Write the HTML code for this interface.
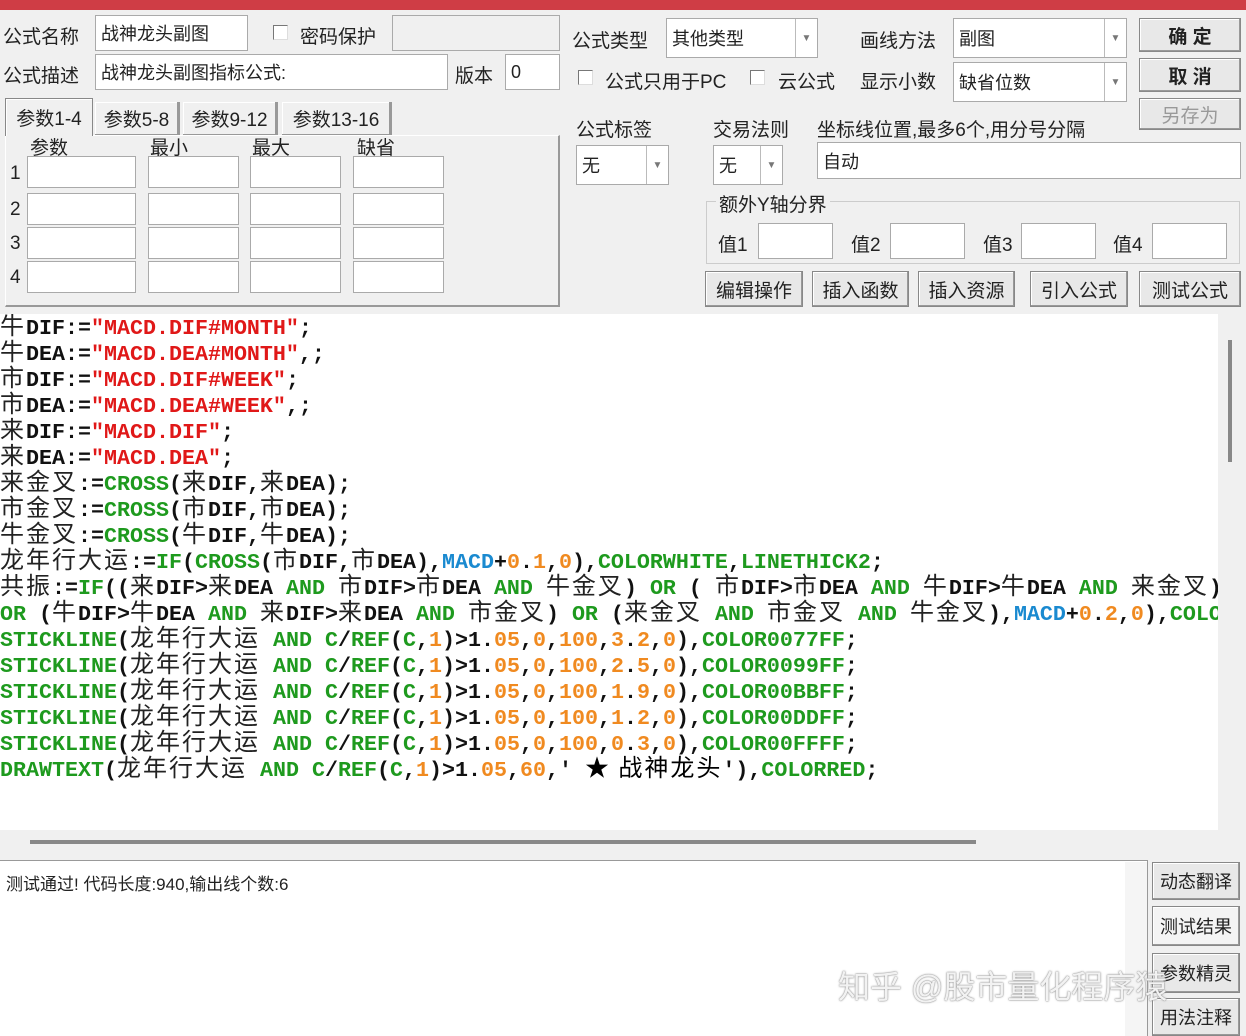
<!DOCTYPE html>
<html><head><meta charset="utf-8"><style>
*{box-sizing:border-box;margin:0;padding:0}
body{width:1246px;height:1036px;overflow:hidden;background:#f0f0f0;position:relative;font-family:"Liberation Sans","Noto Sans CJK SC",sans-serif;font-size:19px;color:#222}
.a{position:absolute}
.lbl{position:absolute;font-size:19px;color:#222;white-space:nowrap}
.in{position:absolute;background:#fff;border:1px solid #aaa;font-size:18px;padding-left:5px;white-space:nowrap;display:flex;align-items:center}
.dis{background:#f0f0f0}
.cb{position:absolute;width:15px;height:15px;background:#fff;border:1px solid #777;border-right-color:#ddd;border-bottom-color:#ddd}
.dd{position:absolute;right:0;top:0;bottom:0;width:22px;border-left:1px solid #bbb;color:#777;font-size:10px;display:flex;align-items:center;justify-content:center}
.btn{position:absolute;background:#e8e8e8;border:1px solid #888;box-shadow:inset -1px -1px 0 #999,inset 1px 1px 0 #fff;font-size:19px;display:flex;align-items:center;justify-content:center;white-space:nowrap;color:#222}
#code{position:absolute;left:0;top:314px;width:1218px;height:516px;background:#fff;overflow:hidden}
#code .in2{position:absolute;left:0;top:-3px}
#code .in2 div{height:26px;line-height:26px;white-space:pre;font-family:"Liberation Mono",monospace;font-size:21.67px;font-weight:bold;color:#111}
.c{font-family:"Noto Sans CJK SC",sans-serif;font-weight:normal;font-size:24px;letter-spacing:2px;color:#222}
.g{color:#1e9a1e}.r{color:#e01818}.o{color:#f08a20}.b{color:#1a8ad0}
</style></head><body>
<div class="a" style="left:0;top:0;width:1246px;height:10px;background:#cf3d45"></div>

<div class="lbl" style="left:3px;top:22px">公式名称</div>
<div class="in" style="left:95px;top:15px;width:153px;height:36px">战神龙头副图</div>
<div class="cb" style="left:273px;top:25px"></div>
<div class="lbl" style="left:300px;top:22px">密码保护</div>
<div class="in dis" style="left:392px;top:15px;width:168px;height:36px"></div>
<div class="lbl" style="left:3px;top:61px">公式描述</div>
<div class="in" style="left:95px;top:54px;width:353px;height:36px">战神龙头副图指标公式:</div>
<div class="lbl" style="left:455px;top:61px">版本</div>
<div class="in" style="left:505px;top:54px;width:55px;height:36px">0</div>

<div class="lbl" style="left:572px;top:26px">公式类型</div>
<div class="in" style="left:666px;top:18px;width:152px;height:40px">其他类型<div class="dd">▼</div></div>
<div class="lbl" style="left:860px;top:26px">画线方法</div>
<div class="in" style="left:953px;top:18px;width:174px;height:40px">副图<div class="dd">▼</div></div>
<div class="btn" style="left:1139px;top:18px;width:102px;height:34px;font-weight:bold">确 定</div>
<div class="cb" style="left:578px;top:70px"></div>
<div class="lbl" style="left:605px;top:67px">公式只用于PC</div>
<div class="cb" style="left:750px;top:70px"></div>
<div class="lbl" style="left:778px;top:67px">云公式</div>
<div class="lbl" style="left:860px;top:67px">显示小数</div>
<div class="in" style="left:953px;top:62px;width:174px;height:40px">缺省位数<div class="dd">▼</div></div>
<div class="btn" style="left:1139px;top:58px;width:102px;height:34px;font-weight:bold">取 消</div>
<div class="btn" style="left:1139px;top:98px;width:102px;height:32px;color:#999">另存为</div>

<div class="a" style="left:5px;top:135px;width:555px;height:172px;border:1px solid #fff;border-right:2px solid #999;border-bottom:2px solid #999"></div>
<div class="btn" style="left:5px;top:98px;width:88px;height:38px;background:#f0f0f0;border-bottom:none;box-shadow:inset 1px 1px 0 #fff">参数1-4</div>
<div class="btn" style="left:95px;top:102px;width:85px;height:33px;background:#f0f0f0;border:none;border-right:2px solid #999">参数5-8</div>
<div class="btn" style="left:183px;top:102px;width:95px;height:33px;background:#f0f0f0;border:none;border-right:2px solid #999">参数9-12</div>
<div class="btn" style="left:282px;top:102px;width:110px;height:33px;background:#f0f0f0;border:none;border-right:2px solid #999">参数13-16</div>
<div class="lbl" style="left:30px;top:133px">参数</div>
<div class="lbl" style="left:150px;top:133px">最小</div>
<div class="lbl" style="left:252px;top:133px">最大</div>
<div class="lbl" style="left:357px;top:133px">缺省</div>
<div class="lbl" style="left:10px;top:163px">1</div><div class="lbl" style="left:10px;top:199px">2</div><div class="lbl" style="left:10px;top:233px">3</div><div class="lbl" style="left:10px;top:267px">4</div>
<div class="in" style="left:27px;top:156px;width:109px;height:32px"></div><div class="in" style="left:148px;top:156px;width:91px;height:32px"></div><div class="in" style="left:250px;top:156px;width:91px;height:32px"></div><div class="in" style="left:353px;top:156px;width:91px;height:32px"></div>
<div class="in" style="left:27px;top:193px;width:109px;height:32px"></div><div class="in" style="left:148px;top:193px;width:91px;height:32px"></div><div class="in" style="left:250px;top:193px;width:91px;height:32px"></div><div class="in" style="left:353px;top:193px;width:91px;height:32px"></div>
<div class="in" style="left:27px;top:227px;width:109px;height:32px"></div><div class="in" style="left:148px;top:227px;width:91px;height:32px"></div><div class="in" style="left:250px;top:227px;width:91px;height:32px"></div><div class="in" style="left:353px;top:227px;width:91px;height:32px"></div>
<div class="in" style="left:27px;top:261px;width:109px;height:32px"></div><div class="in" style="left:148px;top:261px;width:91px;height:32px"></div><div class="in" style="left:250px;top:261px;width:91px;height:32px"></div><div class="in" style="left:353px;top:261px;width:91px;height:32px"></div>

<div class="lbl" style="left:576px;top:115px">公式标签</div>
<div class="lbl" style="left:713px;top:115px">交易法则</div>
<div class="lbl" style="left:817px;top:115px">坐标线位置,最多6个,用分号分隔</div>
<div class="in" style="left:576px;top:145px;width:93px;height:40px">无<div class="dd">▼</div></div>
<div class="in" style="left:713px;top:145px;width:70px;height:40px">无<div class="dd">▼</div></div>
<div class="in" style="left:817px;top:142px;width:424px;height:37px">自动</div>
<div class="a" style="left:706px;top:201px;width:534px;height:63px;border:1px solid #ccc"></div>
<div class="lbl" style="left:716px;top:190px;background:#f0f0f0;padding:0 3px">额外Y轴分界</div>
<div class="lbl" style="left:718px;top:230px">值1</div><div class="in" style="left:758px;top:223px;width:75px;height:36px"></div>
<div class="lbl" style="left:851px;top:230px">值2</div><div class="in" style="left:890px;top:223px;width:75px;height:36px"></div>
<div class="lbl" style="left:983px;top:230px">值3</div><div class="in" style="left:1021px;top:223px;width:75px;height:36px"></div>
<div class="lbl" style="left:1113px;top:230px">值4</div><div class="in" style="left:1152px;top:223px;width:75px;height:36px"></div>
<div class="btn" style="left:705px;top:271px;width:98px;height:36px">编辑操作</div>
<div class="btn" style="left:812px;top:271px;width:97px;height:36px">插入函数</div>
<div class="btn" style="left:918px;top:271px;width:97px;height:36px">插入资源</div>
<div class="btn" style="left:1030px;top:271px;width:98px;height:36px">引入公式</div>
<div class="btn" style="left:1139px;top:271px;width:102px;height:36px">测试公式</div>

<div id="code"><div class="in2">
<div><span class="c">牛</span>DIF:=<span class="r">"MACD.DIF#MONTH"</span>;</div>
<div><span class="c">牛</span>DEA:=<span class="r">"MACD.DEA#MONTH"</span>,;</div>
<div><span class="c">市</span>DIF:=<span class="r">"MACD.DIF#WEEK"</span>;</div>
<div><span class="c">市</span>DEA:=<span class="r">"MACD.DEA#WEEK"</span>,;</div>
<div><span class="c">来</span>DIF:=<span class="r">"MACD.DIF"</span>;</div>
<div><span class="c">来</span>DEA:=<span class="r">"MACD.DEA"</span>;</div>
<div><span class="c">来金叉</span>:=<span class="g">CROSS</span>(<span class="c">来</span>DIF,<span class="c">来</span>DEA);</div>
<div><span class="c">市金叉</span>:=<span class="g">CROSS</span>(<span class="c">市</span>DIF,<span class="c">市</span>DEA);</div>
<div><span class="c">牛金叉</span>:=<span class="g">CROSS</span>(<span class="c">牛</span>DIF,<span class="c">牛</span>DEA);</div>
<div><span class="c">龙年行大运</span>:=<span class="g">IF</span>(<span class="g">CROSS</span>(<span class="c">市</span>DIF,<span class="c">市</span>DEA),<span class="b">MACD</span>+<span class="o">0</span>.<span class="o">1</span>,<span class="o">0</span>),<span class="g">COLORWHITE</span>,<span class="g">LINETHICK2</span>;</div>
<div><span class="c">共振</span>:=<span class="g">IF</span>((<span class="c">来</span>DIF&gt;<span class="c">来</span>DEA <span class="g">AND</span> <span class="c">市</span>DIF&gt;<span class="c">市</span>DEA <span class="g">AND</span> <span class="c">牛金叉</span>) <span class="g">OR</span> ( <span class="c">市</span>DIF&gt;<span class="c">市</span>DEA <span class="g">AND</span> <span class="c">牛</span>DIF&gt;<span class="c">牛</span>DEA <span class="g">AND</span> <span class="c">来金叉</span>);</div>
<div><span class="g">OR</span> (<span class="c">牛</span>DIF&gt;<span class="c">牛</span>DEA <span class="g">AND</span> <span class="c">来</span>DIF&gt;<span class="c">来</span>DEA <span class="g">AND</span> <span class="c">市金叉</span>) <span class="g">OR</span> (<span class="c">来金叉</span> <span class="g">AND</span> <span class="c">市金叉</span> <span class="g">AND</span> <span class="c">牛金叉</span>),<span class="b">MACD</span>+<span class="o">0</span>.<span class="o">2</span>,<span class="o">0</span>),<span class="g">COLORRED</span>;</div>
<div><span class="g">STICKLINE</span>(<span class="c">龙年行大运</span> <span class="g">AND</span> <span class="g">C</span>/<span class="g">REF</span>(<span class="g">C</span>,<span class="o">1</span>)&gt;1.<span class="o">05</span>,<span class="o">0</span>,<span class="o">100</span>,<span class="o">3</span>.<span class="o">2</span>,<span class="o">0</span>),<span class="g">COLOR0077FF</span>;</div>
<div><span class="g">STICKLINE</span>(<span class="c">龙年行大运</span> <span class="g">AND</span> <span class="g">C</span>/<span class="g">REF</span>(<span class="g">C</span>,<span class="o">1</span>)&gt;1.<span class="o">05</span>,<span class="o">0</span>,<span class="o">100</span>,<span class="o">2</span>.<span class="o">5</span>,<span class="o">0</span>),<span class="g">COLOR0099FF</span>;</div>
<div><span class="g">STICKLINE</span>(<span class="c">龙年行大运</span> <span class="g">AND</span> <span class="g">C</span>/<span class="g">REF</span>(<span class="g">C</span>,<span class="o">1</span>)&gt;1.<span class="o">05</span>,<span class="o">0</span>,<span class="o">100</span>,<span class="o">1</span>.<span class="o">9</span>,<span class="o">0</span>),<span class="g">COLOR00BBFF</span>;</div>
<div><span class="g">STICKLINE</span>(<span class="c">龙年行大运</span> <span class="g">AND</span> <span class="g">C</span>/<span class="g">REF</span>(<span class="g">C</span>,<span class="o">1</span>)&gt;1.<span class="o">05</span>,<span class="o">0</span>,<span class="o">100</span>,<span class="o">1</span>.<span class="o">2</span>,<span class="o">0</span>),<span class="g">COLOR00DDFF</span>;</div>
<div><span class="g">STICKLINE</span>(<span class="c">龙年行大运</span> <span class="g">AND</span> <span class="g">C</span>/<span class="g">REF</span>(<span class="g">C</span>,<span class="o">1</span>)&gt;1.<span class="o">05</span>,<span class="o">0</span>,<span class="o">100</span>,<span class="o">0</span>.<span class="o">3</span>,<span class="o">0</span>),<span class="g">COLOR00FFFF</span>;</div>
<div><span class="g">DRAWTEXT</span>(<span class="c">龙年行大运</span> <span class="g">AND</span> <span class="g">C</span>/<span class="g">REF</span>(<span class="g">C</span>,<span class="o">1</span>)&gt;1.<span class="o">05</span>,<span class="o">60</span>,' <span class="c" style="color:#000">★ 战神龙头</span>'),<span class="g">COLORRED</span>;</div>
</div></div>
<div class="a" style="left:1218px;top:314px;width:24px;height:516px;background:#f0f0f0"></div>
<div class="a" style="left:1228px;top:340px;width:4px;height:122px;background:#888"></div>
<div class="a" style="left:0;top:830px;width:1242px;height:28px;background:#f0f0f0"></div>
<div class="a" style="left:30px;top:840px;width:946px;height:4px;background:#888"></div>

<div class="a" style="left:0;top:860px;width:1148px;height:176px;background:#fff;border-top:1px solid #999;border-right:1px solid #999"></div>
<div class="a" style="left:1125px;top:862px;width:22px;height:174px;background:#f5f5f5"></div>
<div class="lbl" style="left:6px;top:870px;font-size:17px">测试通过! 代码长度:940,输出线个数:6</div>
<div class="btn" style="left:1152px;top:862px;width:88px;height:38px;font-size:18px">动态翻译</div>
<div class="btn" style="left:1152px;top:906px;width:88px;height:40px;font-size:18px;background:#f4f4f4">测试结果</div>
<div class="btn" style="left:1152px;top:953px;width:88px;height:40px;font-size:18px">参数精灵</div>
<div class="btn" style="left:1152px;top:998px;width:88px;height:38px;font-size:18px">用法注释</div>
<div class="lbl" style="left:838px;top:962px;font-size:32px;color:rgba(255,255,255,0.9);text-shadow:0 0 1px #777,0 0 2px #999">知乎 @股市量化程序猿</div>
</body></html>
